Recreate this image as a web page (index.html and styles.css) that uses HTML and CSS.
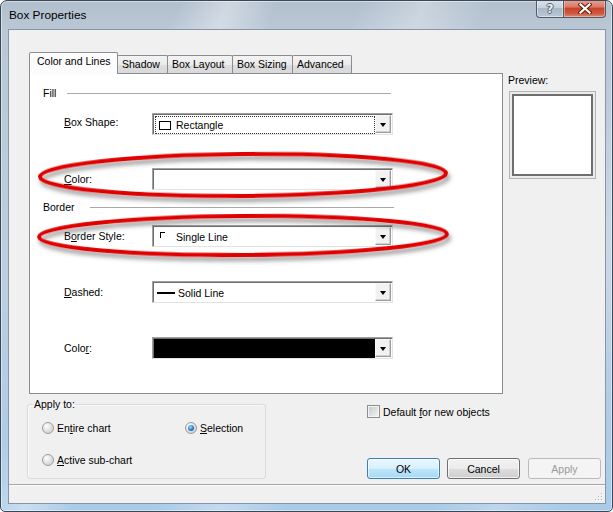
FILE: index.html
```html
<!DOCTYPE html>
<html>
<head>
<meta charset="utf-8">
<title>Box Properties</title>
<link rel="stylesheet" href="styles.css">
</head>
<body>
<div class="window">
  <div class="titlebar">
    <span class="title">Box Properties</span>
    <div class="caption-btns">
      <div class="cbtn help"><span>?</span></div>
      <div class="cbtn close">
        <svg width="14" height="11" viewBox="0 0 14 11">
          <path d="M2.5 1.5 L11.5 9.5 M11.5 1.5 L2.5 9.5" stroke="#5a1b10" stroke-width="4.2" stroke-linecap="square" fill="none"/>
          <path d="M2.5 1.5 L11.5 9.5 M11.5 1.5 L2.5 9.5" stroke="#ffffff" stroke-width="2.2" stroke-linecap="square" fill="none"/>
        </svg>
      </div>
    </div>
  </div>

  <div class="client">
    <div class="top">
      <div class="tabctl">
        <div class="tabs">
          <div class="tab active t1">Color and Lines</div>
          <div class="tab t2">Shadow</div>
          <div class="tab t3">Box Layout</div>
          <div class="tab t4">Box Sizing</div>
          <div class="tab t5">Advanced</div>
        </div>
        <div class="panel">
          <div class="section sec-fill"><span>Fill</span><i class="rule"></i></div>

          <div class="row r-shape">
            <label><u>B</u>ox Shape:</label>
            <div class="combo">
              <div class="value focused"><span class="ico-rect"></span><span>Rectangle</span></div>
              <div class="arrow"><i></i></div>
            </div>
          </div>

          <div class="row r-color1">
            <label><u>C</u>olor:</label>
            <div class="combo">
              <div class="value"></div>
              <div class="arrow"><i></i></div>
            </div>
          </div>

          <div class="section sec-border"><span>Border</span><i class="rule"></i></div>

          <div class="row r-bstyle">
            <label>B<u>o</u>rder Style:</label>
            <div class="combo">
              <div class="value"><span class="ico-corner"></span><span class="txt-gap">Single Line</span></div>
              <div class="arrow"><i></i></div>
            </div>
          </div>

          <div class="row r-dashed">
            <label><u>D</u>ashed:</label>
            <div class="combo">
              <div class="value"><span class="ico-dash"></span><span>Solid Line</span></div>
              <div class="arrow"><i></i></div>
            </div>
          </div>

          <div class="row r-color2">
            <label>Colo<u>r</u>:</label>
            <div class="combo">
              <div class="value black"></div>
              <div class="arrow"><i></i></div>
            </div>
          </div>
        </div>
      </div>

      <div class="preview">
        <div class="plabel">Preview:</div>
        <div class="pbox"><div class="pinner"></div></div>
      </div>
    </div>

    <div class="bottom">
      <fieldset class="group">
        <legend>Apply to:</legend>
        <div class="radios">
          <div class="radio"><span class="rb"></span><span>En<u>t</u>ire chart</span></div>
          <div class="radio"><span class="rb on"></span><span><u>S</u>election</span></div>
          <div class="radio"><span class="rb"></span><span><u>A</u>ctive sub-chart</span></div>
        </div>
      </fieldset>
      <div class="side">
        <div class="check"><span class="cb"></span><span>Default <u>f</u>or new objects</span></div>
        <div class="buttons">
          <div class="btn default">OK</div>
          <div class="btn">Cancel</div>
          <div class="btn disabled">Apply</div>
        </div>
      </div>
    </div>

    <div class="sep"></div>
    <div class="status">
      <svg class="grip" width="10" height="10" viewBox="0 0 10 10">
        <g fill="#ffffff">
          <rect x="9" y="3" width="1" height="1"/><rect x="9" y="6" width="1" height="1"/><rect x="9" y="9" width="1" height="1"/>
          <rect x="6" y="6" width="1" height="1"/><rect x="6" y="9" width="1" height="1"/><rect x="3" y="9" width="1" height="1"/>
        </g>
        <g fill="#b0b6bc">
          <rect x="8" y="2" width="1" height="1"/><rect x="8" y="5" width="1" height="1"/><rect x="8" y="8" width="1" height="1"/>
          <rect x="5" y="5" width="1" height="1"/><rect x="5" y="8" width="1" height="1"/><rect x="2" y="8" width="1" height="1"/>
        </g>
      </svg>
    </div>
  </div>

  <svg class="annot" width="613" height="512" viewBox="0 0 613 512">
    <defs>
      <filter id="sh" x="-10%" y="-60%" width="120%" height="220%">
        <feDropShadow dx="2" dy="4" stdDeviation="2.2" flood-color="#404040" flood-opacity="0.55"/>
      </filter>
    </defs>
    <ellipse cx="243" cy="175" rx="203" ry="21" transform="rotate(-0.5 243 175)" fill="none" stroke="#e00000" stroke-width="4" filter="url(#sh)"/>
    <ellipse cx="243" cy="235.5" rx="204" ry="19.5" transform="rotate(-0.4 243 235)" fill="none" stroke="#e00000" stroke-width="4" filter="url(#sh)"/>
  </svg>
</div>
</body>
</html>
```

FILE: styles.css
```css
* { box-sizing: border-box; }
html, body { margin: 0; padding: 0; background: #ffffff; }
body {
  font-family: "Liberation Sans", Arial, sans-serif;
  font-size: 10.5px;
  color: #000;
}
u { text-decoration: underline; text-underline-offset: 1px; }

.window {
  position: relative;
  width: 613px;
  height: 512px;
  border: 1px solid #3a4858;
  border-radius: 7px 7px 5px 5px;
  overflow: hidden;
  display: flex;
  flex-direction: column;
  background:
    linear-gradient(112deg,
      rgba(255,255,255,0) 0%, rgba(255,255,255,0) 22%,
      rgba(255,255,255,.38) 28%, rgba(255,255,255,0) 34%,
      rgba(255,255,255,0) 44%, rgba(255,255,255,.30) 52%,
      rgba(255,255,255,0) 60%, rgba(255,255,255,0) 78%,
      rgba(255,255,255,.22) 86%, rgba(255,255,255,0) 94%),
    linear-gradient(to bottom, #b1bfcd 0, #bac8d6 28px, #bccfe0 55%, #a9cbe8 100%);
  box-shadow: inset 0 0 0 1px rgba(255,255,255,.45);
}

/* title bar */
.titlebar {
  height: 28px;
  display: flex;
  align-items: flex-start;
}
.title {
  padding: 7px 0 0 8px;
  font-size: 11.8px;
  line-height: 14px;
  color: #000;
}
.caption-btns {
  margin-left: auto;
  margin-right: 6px;
  margin-top: -1px;
  display: flex;
}
.cbtn {
  height: 18px;
  border: 1px solid #4f5b68;
  border-top: none;
  display: flex;
  align-items: center;
  justify-content: center;
}
.help {
  width: 27px;
  border-right: none;
  border-radius: 0 0 0 4px;
  background: linear-gradient(to bottom, #dbe3ea 0%, #c6d1dc 45%, #a9b8c7 50%, #b9c8d6 100%);
  box-shadow: inset 0 0 0 1px rgba(255,255,255,.45);
}
.help span {
  font-family: "DejaVu Sans", sans-serif;
  font-weight: bold;
  font-size: 12px;
  line-height: 12px;
  color: #e9eef3;
  text-shadow: -1px 0 0 #59636e, 1px 0 0 #59636e, 0 -1px 0 #59636e, 0 1px 0 #59636e;
}
.close {
  width: 43px;
  border-radius: 0 0 4px 0;
  background: linear-gradient(to bottom, #e8a394 0%, #d97a64 40%, #c7432a 50%, #cf5a40 80%, #e08d74 100%);
  box-shadow: inset 0 0 0 1px rgba(255,220,210,.45);
}
.close svg { display: block; }

/* client */
.client {
  margin: 0 6px 7px 7px;
  height: 475px;
  border: 1px solid #8696a8;
  background: #f0f0f0;
  display: flex;
  flex-direction: column;
}
.top {
  display: flex;
  padding: 22px 0 0 20px;
}
.tabctl { width: 474px; }

.tabs {
  height: 21px;
  display: flex;
  align-items: flex-end;
  position: relative;
  z-index: 1;
}
.tab {
  height: 18px;
  border: 1px solid #898c95;
  border-bottom: none;
  margin-left: -1px;
  background: linear-gradient(to bottom, #f3f3f3 0%, #ebebeb 50%, #dedede 51%, #d9d9d9 100%);
  line-height: 16px;
  padding-left: 4px;
  white-space: nowrap;
  border-radius: 2px 2px 0 0;
}
.tab.active {
  height: 22px;
  margin-left: 0;
  margin-bottom: -1px;
  background: #fcfcfc;
  line-height: 17px;
  padding-left: 7px;
}
.t1 { width: 89px; }
.t2 { width: 51px; }
.t3 { width: 66px; }
.t4 { width: 61px; }
.t5 { width: 60px; }

.panel {
  height: 321px;
  border: 1px solid #898c95;
  background: #ffffff;
  padding-top: 12px;
}

.section {
  display: grid;
  align-items: center;
  height: 14px;
  margin-left: 13px;
  line-height: 14px;
}
.section .rule {
  display: block;
  height: 1px;
  background: #a9a9a9;
}
.sec-fill { grid-template-columns: 24px 324px; }
.sec-border { grid-template-columns: 47px 304px; margin-top: 10px; }

.row {
  display: grid;
  grid-template-columns: 88px 241px;
  align-items: center;
  padding-left: 34px;
}
.row label { line-height: 14px; white-space: nowrap; }
.r-shape { margin-top: 13px; }
.r-shape label { margin-top: -4px; }
.r-color1 { margin-top: 33px; }
.r-bstyle { margin-top: 11px; }
.r-dashed { margin-top: 34px; }
.r-color2 { margin-top: 34px; }

.combo {
  height: 22px;
  display: flex;
  padding: 1px;
  background: #ffffff;
  border: 1px solid;
  border-color: #a0a0a0 #e3e3e3 #e3e3e3 #a0a0a0;
  box-shadow: inset 1px 1px 0 #6f6f6f;
}
.value {
  flex: 1;
  height: 18px;
  margin: 1px 0 0 1px;
  display: flex;
  align-items: center;
  padding-left: 3px;
  white-space: nowrap;
}
.value.focused {
  outline: 1px dotted #333;
  outline-offset: -1px;
}
.value.black {
  background: #000;
  margin: 0;
  height: 19px;
}
.arrow {
  width: 16px;
  height: 18px;
  margin-top: 0;
  background: #f2f2f2;
  border: 1px solid;
  border-color: #fafafa #9a9a9a #9a9a9a #fafafa;
  box-shadow: inset -1px -1px 0 #d2d2d2;
  display: flex;
  align-items: center;
  justify-content: center;
}
.arrow i {
  width: 0;
  height: 0;
  border-left: 3.5px solid transparent;
  border-right: 3.5px solid transparent;
  border-top: 4px solid #000;
  margin-top: 1px;
}
.ico-rect {
  width: 12px;
  height: 9px;
  border: 1px solid #000;
  background: #fff;
  margin: 0 5px 0 1px;
}
.ico-corner {
  width: 5px;
  height: 6px;
  border-top: 1px solid #000;
  border-left: 1px solid #000;
  margin: -4px 0 0 2px;
}
.txt-gap { margin-left: 11px; }
.ico-dash {
  width: 18px;
  height: 2px;
  background: #000;
  margin: 0 3px 0 -1px;
}

/* preview */
.preview {
  margin-left: 5px;
  padding-top: 21px;
}
.plabel { line-height: 14px; }
.pbox {
  margin: 4px 0 0 1px;
  width: 87px;
  height: 88px;
  border: 1px solid #b4b4b4;
  padding: 2px;
  background: #ececec;
}
.pinner {
  width: 100%;
  height: 100%;
  border: 2px solid #6e6e6e;
  background: #ffffff;
}

/* bottom */
.bottom {
  height: 85px;
  display: flex;
  align-items: flex-start;
  padding-left: 18px;
}
.group {
  margin: 4px 0 0 0;
  padding: 0;
  width: 239px;
  height: 81px;
  min-width: 0;
  border: 1px solid #d3dbe1;
  border-radius: 3px;
  box-shadow: inset 1px 1px 0 #fbfbfb;
}
.group legend {
  margin-left: 5px;
  padding: 0 1px;
  line-height: 13px;
}
.radios {
  display: grid;
  grid-template-columns: 143px auto;
  row-gap: 18px;
  padding: 10px 0 0 14px;
}
.radio {
  display: flex;
  align-items: center;
  height: 14px;
  white-space: nowrap;
}
.rb {
  position: relative;
  width: 12px;
  height: 12px;
  border-radius: 50%;
  border: 1px solid #999b9f;
  background: radial-gradient(circle at 35% 30%, #ffffff 0%, #e4e4e4 45%, #c7c9cc 100%);
  margin-right: 3px;
  flex: none;
}
.rb.on::after {
  content: "";
  position: absolute;
  left: 2px;
  top: 2px;
  width: 6px;
  height: 6px;
  border-radius: 50%;
  background: radial-gradient(circle at 40% 35%, #9ee0ff 0%, #2a86d0 50%, #0d3f80 100%);
}

.side {
  margin-left: 101px;
  width: 235px;
  height: 85px;
  display: flex;
  flex-direction: column;
}
.check {
  margin-top: 11px;
  display: flex;
  align-items: center;
  height: 13px;
  white-space: nowrap;
}
.cb {
  width: 13px;
  height: 13px;
  border: 1px solid #8f8f8f;
  background: linear-gradient(135deg, #c4c8cd 0%, #e2e4e6 60%, #f6f6f6 100%);
  box-shadow: inset 0 0 0 1px #f4f4f4;
  margin-right: 3px;
  flex: none;
}
.buttons {
  margin-top: auto;
  display: flex;
}
.btn {
  width: 73px;
  height: 21px;
  border: 1px solid #707070;
  border-radius: 3px;
  background: linear-gradient(to bottom, #f2f2f2 0%, #ebebeb 50%, #dddddd 51%, #cfcfcf 100%);
  box-shadow: inset 0 0 0 1px rgba(255,255,255,.7);
  display: flex;
  align-items: center;
  justify-content: center;
  margin-right: 8px;
}
.btn.default {
  margin-right: 7px;
  border-color: #3c7fb1;
  background: linear-gradient(to bottom, #eaf6fd 0%, #d9f0fc 50%, #bee6fd 51%, #a7d9f5 100%);
  box-shadow: inset 0 0 0 1px rgba(255,255,255,.6);
}
.btn.disabled {
  margin-right: 0;
  border-color: #b8bcbf;
  background: #f4f4f4;
  color: #9a9a9a;
  box-shadow: none;
}

.sep {
  margin-top: 5px;
  height: 1px;
  background: #a7a7a7;
}
.status {
  height: 18px;
  display: flex;
  justify-content: flex-end;
  align-items: flex-end;
  padding: 0 2px 2px 0;
  box-shadow: inset 0 1px 0 #fbfbfb;
}
.grip { display: block; }

.annot {
  position: absolute;
  left: -1px;
  top: -1px;
  pointer-events: none;
}
```
